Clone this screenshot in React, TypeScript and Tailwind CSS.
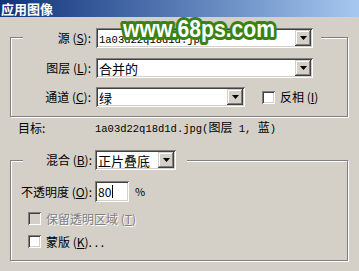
import type { ReactNode } from "react";

// classic win2000 bevels
const sunken =
  "shadow-[inset_1px_1px_0_#808080,inset_-1px_-1px_0_#ffffff,inset_2px_2px_0_#404040,inset_-2px_-2px_0_#d4d0c8]";
const raised =
  "shadow-[inset_-1px_-1px_0_#404040,inset_1px_1px_0_#d4d0c8,inset_-2px_-2px_0_#808080,inset_2px_2px_0_#ffffff]";
const etched = "border border-[#808080] shadow-[1px_1px_0_#ffffff,inset_1px_1px_0_#ffffff]";

const mono = "font-['Liberation_Mono','Noto_Sans_CJK_SC',monospace]";

function Key({ k }: { k: string }) {
  return (
    <>
      {" "}(<u>{k}</u>)
    </>
  );
}

function Combo({ className, children }: { className: string; children: ReactNode }) {
  return (
    <div className={`flex h-[20px] items-stretch bg-white p-[2px] ${sunken} ${className}`}>
      <div className="flex flex-1 items-center overflow-hidden whitespace-nowrap pl-[1px] leading-none">
        {children}
      </div>
      <div className={`flex w-[16px] items-center justify-center bg-[#d4d0c8] ${raised}`}>
        <svg width="7" height="4" viewBox="0 0 7 4">
          <path d="M0 0h7L3.5 4z" fill="#000" />
        </svg>
      </div>
    </div>
  );
}

function Check({ disabled }: { disabled?: boolean }) {
  return (
    <div
      className={`h-[13px] w-[13px] shrink-0 ${sunken} ${disabled ? "bg-[#d4d0c8]" : "bg-white"}`}
    />
  );
}

export default function App() {
  return (
    <div className="relative h-[271px] w-[359px] overflow-hidden bg-[#d4d0c8] font-['Noto_Sans_CJK_SC',sans-serif] text-[12px] text-black">
      <div className="flex h-[17px] items-center bg-linear-to-r from-[#12327a] to-[#a6c8f0] pl-[1px] text-[13px] font-bold leading-none text-white">
        应用图像
      </div>

      {/* source group */}
      <div className={`ml-[10px] mt-[20px] w-[338px] pb-[9px] ${etched}`}>
        <div className="-mt-[10px] ml-[12px] flex w-fit items-center bg-[#d4d0c8] pr-[8px]">
          <span className="w-[68px] whitespace-nowrap text-right leading-none">
            源<Key k="S" />:
          </span>
          <Combo className="ml-[5px] w-[217px]">
            <span className={`${mono} pt-[4px] text-[10.5px]`}>1a03d22q18d1d.jpg</span>
          </Combo>
        </div>
        <div className="mt-[10px] flex items-center">
          <span className="w-[80px] whitespace-nowrap text-right leading-none">
            图层<Key k="L" />:
          </span>
          <Combo className="ml-[5px] w-[217px]">
            <span className="text-[13px]">合并的</span>
          </Combo>
        </div>
        <div className="mt-[9px] flex items-center">
          <span className="w-[80px] whitespace-nowrap text-right leading-none">
            通道<Key k="C" />:
          </span>
          <Combo className="ml-[5px] w-[149px]">
            <span className="text-[13px]">绿</span>
          </Combo>
          <div className="ml-[17px]">
            <Check />
          </div>
          <span className="ml-[5px] whitespace-nowrap leading-none">
            反相<Key k="I" />
          </span>
        </div>
      </div>

      <div className="mt-[4px] flex h-[14px] items-center pl-[18px] leading-none">
        <span className="w-[77px]">目标:</span>
        <span className={`${mono} text-[10.5px]`}>
          1a03d22q18d1d.jpg(<span className="font-['Noto_Sans_CJK_SC',sans-serif] text-[12px]">图层</span> 1,{" "}
          <span className="font-['Noto_Sans_CJK_SC',sans-serif] text-[12px]">蓝</span>)
        </span>
      </div>

      {/* blending group */}
      <div className={`ml-[10px] mt-[25px] w-[338px] pb-[12px] ${etched}`}>
        <div className="-mt-[11px] ml-[12px] flex w-fit items-center bg-[#d4d0c8] pr-[11px]">
          <span className="w-[69px] whitespace-nowrap text-right leading-none">
            混合<Key k="B" />:
          </span>
          <Combo className="ml-[3px] w-[81px]">
            <span className="text-[13px]">正片叠底</span>
          </Combo>
        </div>
        <div className="mt-[11px] flex items-center">
          <span className="w-[81px] whitespace-nowrap text-right leading-none">
            不透明度<Key k="O" />:
          </span>
          <div className={`ml-[3px] flex h-[21px] w-[34px] items-center bg-white pl-[3px] ${sunken}`}>
            <span className="text-[12px] leading-none">80</span>
            <span className="ml-[1px] h-[13px] w-px bg-black" />
          </div>
          <span className="ml-[6px] text-[11px] leading-none">%</span>
        </div>
        <div className="mt-[10px] flex items-center pl-[17px]">
          <Check disabled />
          <span className="ml-[5px] whitespace-nowrap leading-none text-[#808080] [text-shadow:1px_1px_0_#ffffff]">
            保留透明区域<Key k="T" />
          </span>
        </div>
        <div className="mt-[10px] flex items-center pl-[17px]">
          <Check />
          <span className="ml-[5px] whitespace-nowrap leading-none">
            蒙版<Key k="K" />. . .
          </span>
        </div>
      </div>

      {/* site watermark */}
      <svg className="absolute left-[114px] top-[8px]" width="172" height="40" viewBox="0 0 172 40">
        <text
          x="9"
          y="29"
          fontFamily="Liberation Sans, Arial, sans-serif"
          fontWeight="bold"
          fontSize="23"
          textLength="152"
          lengthAdjust="spacingAndGlyphs"
          fill="#ffffff"
          stroke="#3b8214"
          strokeWidth="6"
          strokeLinejoin="round"
          paintOrder="stroke"
        >
          www.68ps.com
        </text>
      </svg>
    </div>
  );
}
